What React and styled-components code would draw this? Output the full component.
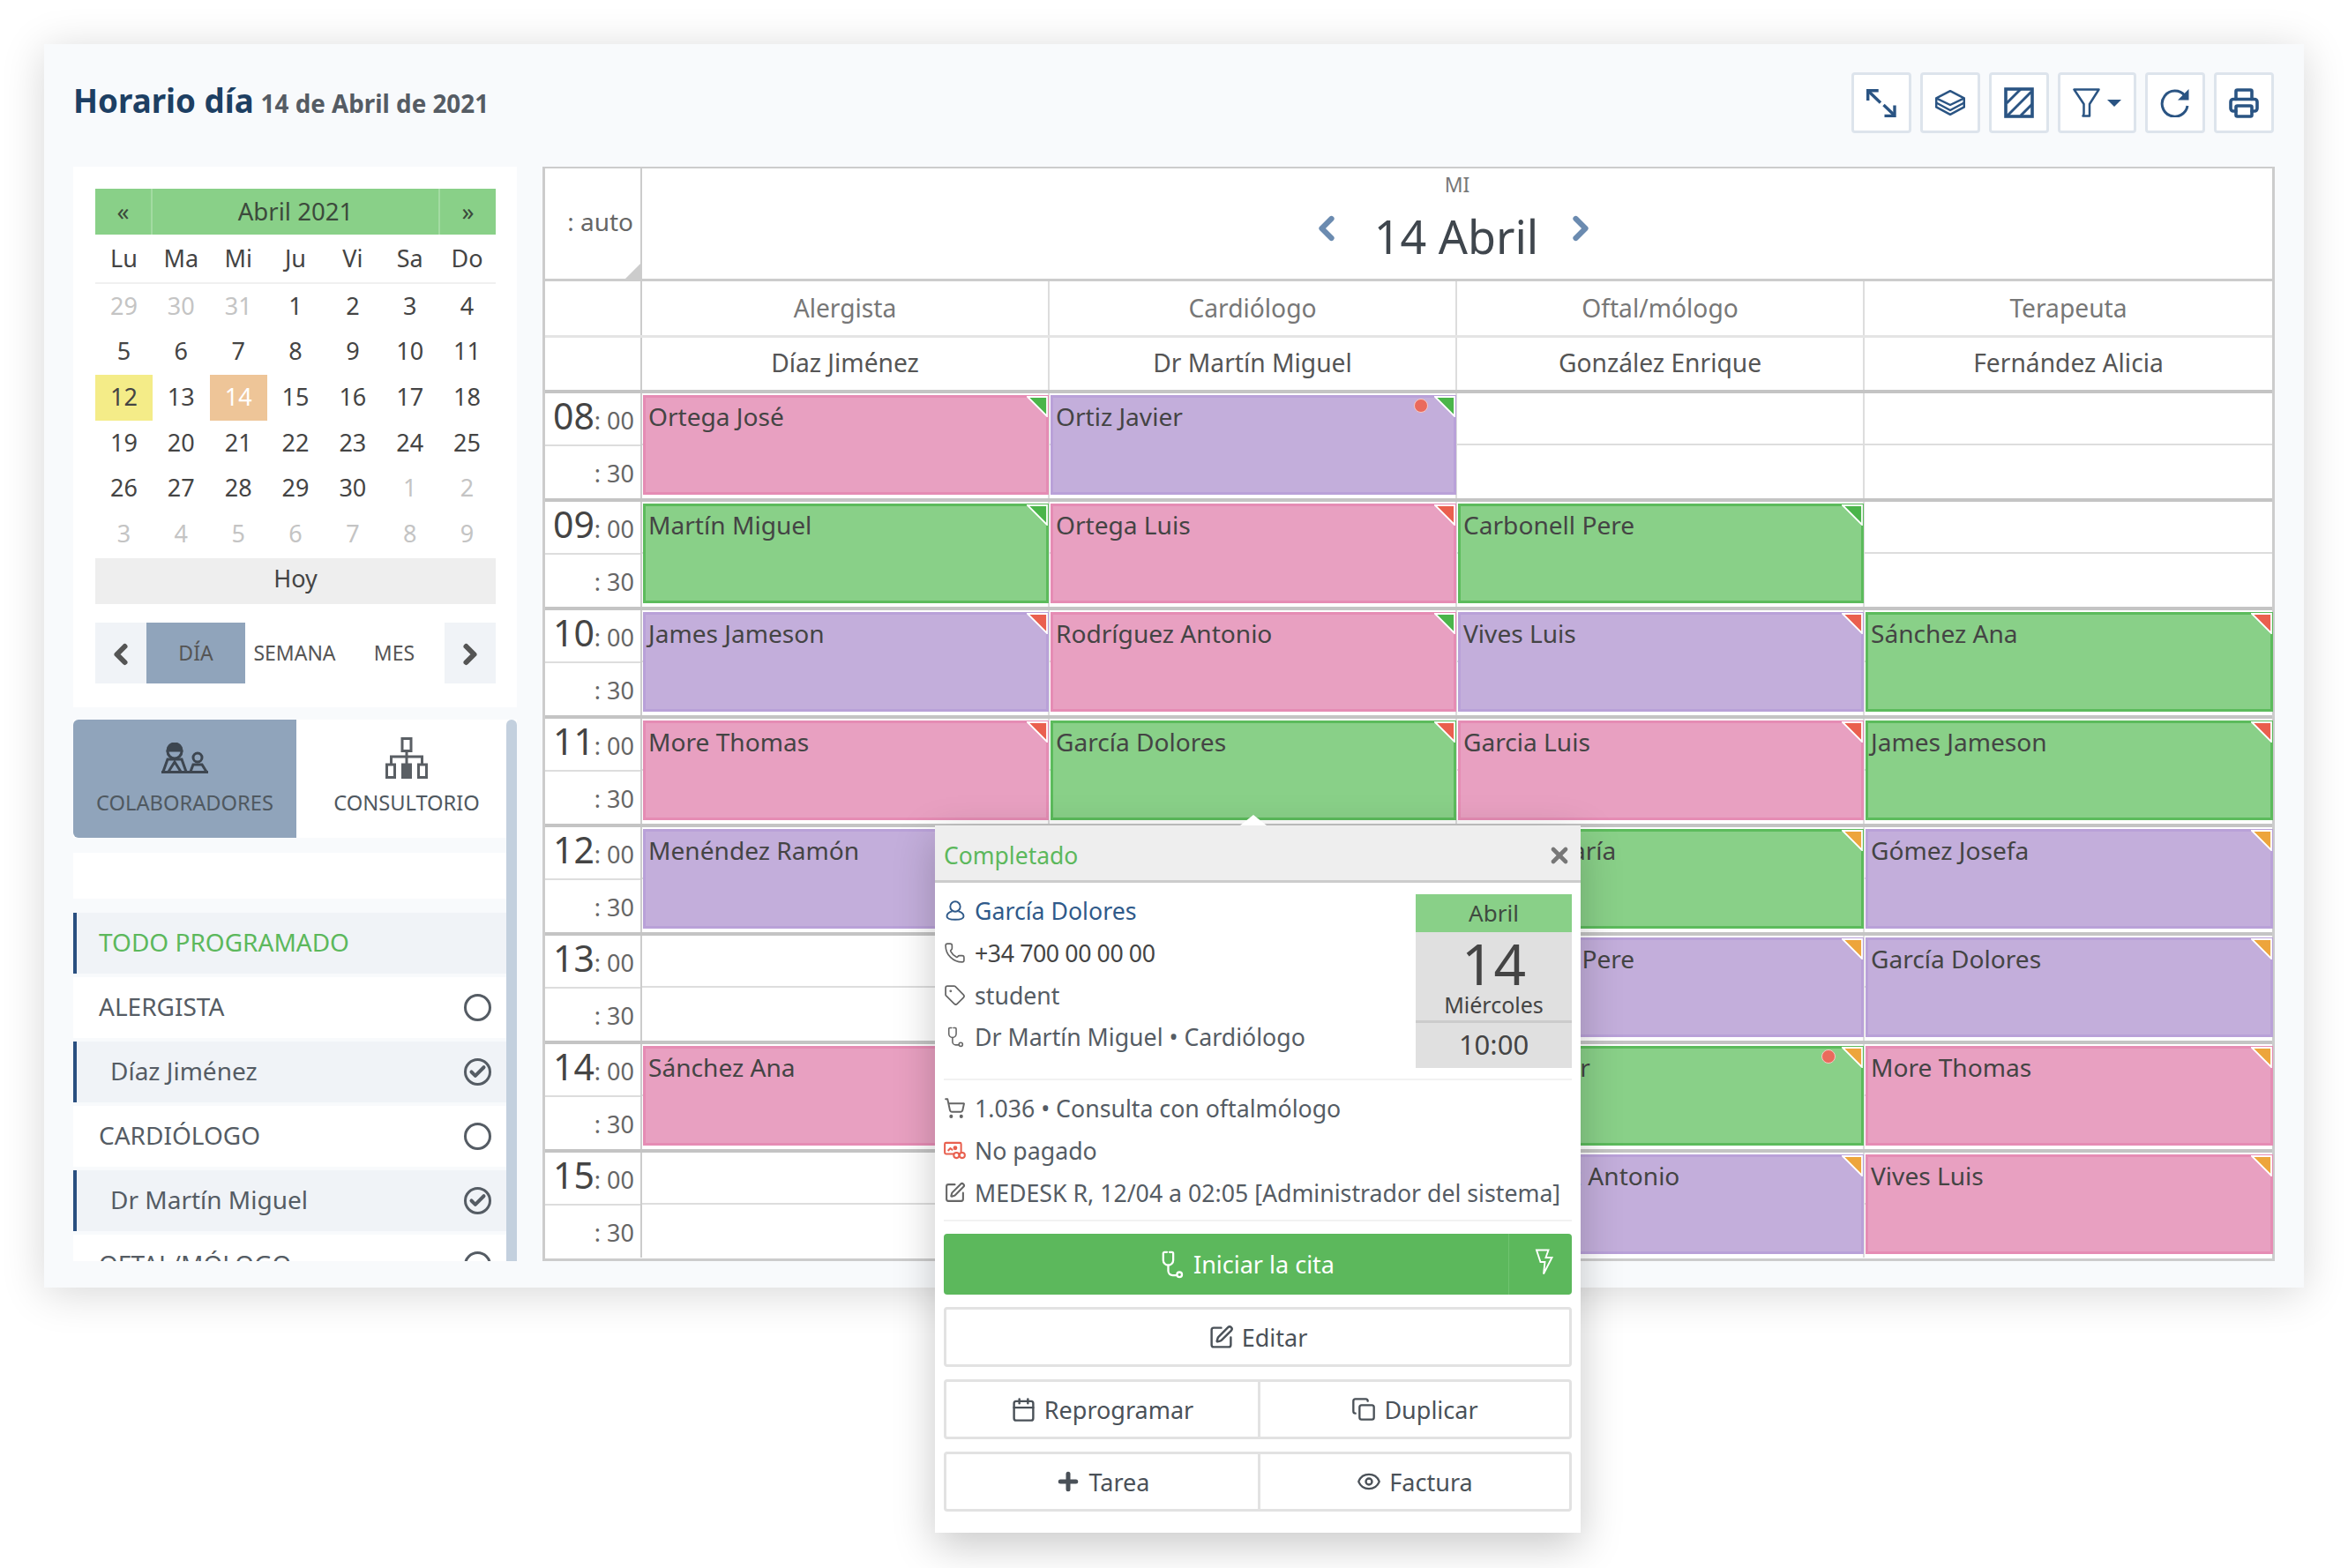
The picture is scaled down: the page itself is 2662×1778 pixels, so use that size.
import React from 'react';
import styled, { createGlobalStyle } from 'styled-components';
import { Phone, Tag, ShoppingCart, SquarePen, Calendar, Copy, Plus, Eye, Printer, X, ChevronLeft, ChevronRight, Check } from 'lucide-react';

const Global = createGlobalStyle`
  html, body { margin: 0; padding: 0; background: #fff; overflow: hidden; }
  body { font-family: "Noto Sans", "Open Sans", sans-serif; color: #444; }
  * { box-sizing: border-box; }
`;

const Page = styled.div`
  width: 2662px;
  height: 1778px;
  padding: 50px;
`;
const Card = styled.div`
  width: 2562px;
  height: 1410px;
  background: #f8fafc;
  box-shadow: 0 6px 46px rgba(0, 0, 0, 0.16);
  padding: 32px 34px 0 33px;
`;
const Header = styled.header`
  height: 69px;
  display: flex;
  align-items: center;
  justify-content: space-between;
  margin-bottom: 38px;
`;
const Title = styled.h1`
  margin: 0;
  padding-bottom: 5px;
  font-size: 36.7px;
  font-weight: 700;
  color: #1d3f63;
  display: flex;
  align-items: baseline;
  gap: 8px;
`;
const Subtitle = styled.span`
  font-size: 27.8px;
  font-weight: 700;
  color: #555c64;
`;
const Tools = styled.div`
  display: flex;
  gap: 10px;
`;
const ToolButton = styled.div`
  width: ${p => p.$w || 68}px;
  height: 69px;
  background: #fff;
  border: 3px solid #dde4ec;
  border-radius: 4px;
  display: flex;
  align-items: center;
  justify-content: center;
  gap: 8px;
  color: #2a5483;
`;
const Caret = styled.span`
  width: 0;
  height: 0;
  border-left: 8px solid transparent;
  border-right: 8px solid transparent;
  border-top: 8px solid #2a5483;
`;
const Body = styled.main`
  display: flex;
  gap: 29px;
  align-items: flex-start;
`;
const Sidebar = styled.aside`
  width: 503px;
  flex: none;
  height: 1241px;
  display: flex;
  flex-direction: column;
  gap: 14px;
  overflow: hidden;
`;
const CalendarPanel = styled.section`
  background: #fff;
  height: 613px;
  padding: 25px 24px 0 25px;
  flex: none;
`;
const MonthBar = styled.div`
  display: grid;
  grid-template-columns: 65px 1fr 65px;
  height: 52px;
  background: #89d088;
  color: #3c4a3c;
`;
const MonthCell = styled.div`
  display: flex;
  align-items: center;
  justify-content: center;
  padding-bottom: 2px;
  border-left: ${p => (p.$line ? '2px solid #a3dba2' : 'none')};
  border-right: ${p => (p.$rline ? '2px solid #a3dba2' : 'none')};
  font-size: 27.6px;
`;
const WeekRow = styled.div`
  display: grid;
  grid-template-columns: repeat(7, 1fr);
  height: 56px;
  padding-bottom: 1px;
  border-bottom: 2px solid #f0f0f0;
`;
const WeekDay = styled.div`
  display: flex;
  align-items: center;
  justify-content: center;
  font-size: 27px;
  color: #444;
`;
const DayGrid = styled.div`
  display: grid;
  grid-template-columns: repeat(7, 1fr);
  grid-auto-rows: 51.6px;
  margin-bottom: 1.4px;
`;
const Day = styled.div`
  display: flex;
  align-items: center;
  justify-content: center;
  padding-bottom: 3px;
  font-size: 27px;
  color: ${p => (p.$today ? '#fff' : p.$muted ? '#c4c4c4' : '#444')};
  background: ${p => (p.$today ? '#eec598' : p.$mark ? '#f4ec88' : 'transparent')};
`;
const TodayBar = styled.div`
  height: 52px;
  background: #eee;
  display: flex;
  align-items: center;
  justify-content: center;
  padding-bottom: 6px;
  font-size: 27px;
  color: #444;
`;
const ViewBar = styled.div`
  margin-top: 21px;
  height: 69px;
  display: grid;
  grid-template-columns: 58px 112px 112px 114px 58px;
`;
const ViewArrow = styled.div`
  background: #f0f3f7;
  color: #555;
  display: flex;
  align-items: center;
  justify-content: center;
  padding-top: 4px;
`;
const ViewTab = styled.div`
  display: flex;
  align-items: center;
  justify-content: center;
  font-size: 23px;
  color: #555;
  background: ${p => (p.$on ? '#90a4bb' : 'transparent')};
`;
const ListArea = styled.section`
  position: relative;
  height: 614px;
  flex: none;
  overflow: hidden;
`;
const Scrollbar = styled.div`
  position: absolute;
  top: 0;
  right: 0;
  bottom: 0;
  width: 12px;
  background: #c3d0de;
  border-radius: 6px 6px 0 0;
`;
const Tabs = styled.div`
  display: grid;
  grid-template-columns: 253px 1fr;
  height: 134px;
  background: #fff;
`;
const TabItem = styled.div`
  display: flex;
  flex-direction: column;
  align-items: center;
  justify-content: flex-end;
  gap: 8px;
  padding-bottom: 24px;
  font-size: 23.7px;
  color: #4f5860;
  background: ${p => (p.$on ? '#90a4bb' : '#fff')};
  border-radius: ${p => (p.$on ? '6px 0 0 6px' : '0')};
`;
const TabIcon = styled.span`
  height: 50px;
  display: flex;
  align-items: center;
  padding-bottom: 3px;
`;
const Search = styled.div`
  height: 52px;
  margin: 17px 11px 16px 0;
  background: #fff;
`;
const List = styled.div`
  display: flex;
  flex-direction: column;
  gap: 4px;
  margin-right: 11px;
`;
const ListRow = styled.div`
  flex: none;
  height: 69px;
  display: flex;
  align-items: center;
  justify-content: space-between;
  padding: 0 18px 3px ${p => (p.$sel ? 38 : 25)}px;
  font-size: 28px;
  color: ${p => (p.$green ? '#5cb85c' : '#555c64')};
  background: ${p => (p.$sel || p.$green ? '#f0f3f7' : '#fff')};
  border-left: 4px solid ${p => (p.$sel || p.$green ? '#2a4f80' : 'transparent')};
`;
const Radio = styled.span`
  width: 31px;
  height: 31px;
  margin-top: 3px;
  border-radius: 50%;
  border: 3px solid #555c64;
  display: flex;
  align-items: center;
  justify-content: center;
  color: #555c64;
`;
const Schedule = styled.section`
  position: relative;
  flex: none;
  width: 1964px;
  height: 1241px;
  background: #fff;
  border: 3px solid #ccc;
  border-top-width: 2px;
  display: flex;
  flex-direction: column;
`;
const DayHead = styled.div`
  display: grid;
  grid-template-columns: 110px 1fr;
  height: 128px;
  flex: none;
  border-bottom: 3px solid #ccc;
`;
const AutoCell = styled.div`
  position: relative;
  border-right: 2px solid #ccc;
  display: flex;
  align-items: center;
  justify-content: flex-end;
  padding: 0 8px 6px 0;
  font-size: 28px;
  color: #666;
`;
const AutoCorner = styled.span`
  position: absolute;
  right: 0;
  bottom: 0;
  width: 0;
  height: 0;
  border-left: 17px solid transparent;
  border-bottom: 17px solid #ccc;
`;
const DayCenter = styled.div`
  display: flex;
  flex-direction: column;
  align-items: center;
  color: #666;
`;
const DayShort = styled.div`
  font-size: 23px;
  line-height: 30px;
  margin-top: 3px;
  color: #777;
`;
const DayTitle = styled.div`
  display: flex;
  align-items: center;
  margin-top: 8px;
  padding-right: 8px;
  font-size: 52px;
  line-height: 72px;
  color: #3f464d;
`;
const DayArrow = styled.span`
  color: #6b8bb0;
  display: flex;
  margin-top: -18px;
  margin-left: ${p => p.$ml}px;
  margin-right: ${p => p.$mr}px;
`;
const HeadRow = styled.div`
  display: grid;
  grid-template-columns: 110px repeat(4, 1fr);
  height: ${p => p.$h}px;
  flex: none;
  border-bottom: ${p => p.$line};
`;
const HeadBlank = styled.div`
  border-right: 2px solid #ccc;
`;
const HeadCell = styled.div`
  display: flex;
  align-items: center;
  justify-content: center;
  padding-bottom: ${p => p.$pb}px;
  font-size: 28.2px;
  color: ${p => p.$c};
  border-right: ${p => (p.$last ? 'none' : '2px solid #ddd')};
`;
const HourRow = styled.div`
  display: grid;
  grid-template-columns: 110px repeat(4, 1fr);
  height: 123px;
  flex: none;
  border-top: 4px solid #c4c4c4;
`;
const TimeCell = styled.div`
  border-right: 2px solid #ccc;
  display: grid;
  grid-template-rows: 1fr 1fr;
`;
const TimeTop = styled.div`
  display: flex;
  align-items: baseline;
  justify-content: flex-end;
  padding-right: 7px;
  border-bottom: 2px solid #ddd;
  font-size: 27px;
  line-height: 50px;
  color: #666;
`;
const TimeBig = styled.span`
  font-size: 41px;
  color: #444;
`;
const TimeBottom = styled.div`
  display: flex;
  align-items: center;
  justify-content: flex-end;
  padding: 3px 7px 0 0;
  font-size: 27px;
  color: #666;
`;
const Slot = styled.div`
  min-width: 0;
  border-right: ${p => (p.$last ? 'none' : '2px solid #ddd')};
  background: linear-gradient(#ddd, #ddd) 0 calc(50% - 2px) / 100% 2px no-repeat;
`;
const Tints = {
  pink: ['#e8a0c1', '#e58cb4'],
  purple: ['#c3aedb', '#b9a1d8'],
  green: ['#89d088', '#5cbb5c'],
};
const Flags = { g: '#4ab54a', r: '#ea5f4e', o: '#eda53c' };
const Event = styled.div`
  position: relative;
  height: 113px;
  margin: 2px -1px 0 1px;
  background: ${p => Tints[p.$tint][0]};
  border: 3px solid ${p => Tints[p.$tint][1]};
  padding: 2px 3px 3px 3px;
  font-size: 28.1px;
  line-height: 38px;
  color: #444;
  white-space: nowrap;
`;
const Flag = styled.span`
  position: absolute;
  top: -2px;
  right: -2px;
  width: 24px;
  height: 24px;
  display: flex;
`;
const Dot = styled.span`
  position: absolute;
  top: 1px;
  right: 29px;
  width: 16px;
  height: 16px;
  border-radius: 50%;
  background: #ea6a5c;
  border: 1px solid #f5c9c4;
`;
const Popup = styled.div`
  position: absolute;
  left: 442px;
  top: 745px;
  width: 732px;
  height: 802px;
  background: #fff;
  box-shadow: 0 14px 44px rgba(0, 0, 0, 0.22);
  display: flex;
  flex-direction: column;
  z-index: 5;
`;
const PopArrow = styled.span`
  position: absolute;
  left: 346px;
  top: -12px;
  width: 0;
  height: 0;
  border-left: 15px solid transparent;
  border-right: 15px solid transparent;
  border-bottom: 12px solid #fff;
`;
const PopHead = styled.div`
  height: 65px;
  flex: none;
  background: #eee;
  border-bottom: 3px solid #ccc;
  display: flex;
  align-items: center;
  justify-content: space-between;
  padding: 5px 10px 0 10px;
  font-size: 26.5px;
  color: #5cb85c;
`;
const PopClose = styled.span`
  color: #777;
  display: flex;
`;
const PopBody = styled.div`
  padding: 8px 10px 0;
`;
const InfoTop = styled.div`
  display: flex;
  justify-content: space-between;
  height: 216px;
  border-bottom: 2px solid #f2f2f2;
`;
const InfoRows = styled.div`
  display: flex;
  flex-direction: column;
`;
const InfoRow = styled.div`
  height: 47.7px;
  display: flex;
  align-items: center;
  gap: 10px;
  font-size: 26.7px;
  letter-spacing: ${p => p.$ls || 0}px;
  white-space: nowrap;
  color: ${p => p.$c || '#555c64'};
`;
const IconSlot = styled.span`
  width: 25px;
  flex: none;
  display: flex;
  justify-content: center;
  color: ${p => p.$c || '#666'};
`;
const DateBox = styled.div`
  width: 177px;
  height: 197px;
  margin-top: 5px;
  background: #e0e0e0;
  text-align: center;
  display: flex;
  flex-direction: column;
`;
const DateMonth = styled.div`
  height: 43px;
  line-height: 42px;
  background: #89d088;
  font-size: 26px;
  color: #3f4a3f;
`;
const DateDay = styled.div`
  height: 103px;
  border-bottom: 3px solid #ccc;
  color: #444;
`;
const DateNum = styled.div`
  font-size: 64px;
  line-height: 66px;
  margin-top: 3px;
`;
const DateName = styled.div`
  font-size: 25px;
  line-height: 27px;
`;
const DateTime = styled.div`
  font-size: 31px;
  line-height: 49px;
  color: #444;
`;
const InfoBottom = styled.div`
  padding-top: 8px;
  height: 160px;
  border-bottom: 2px solid #f2f2f2;
`;
const Actions = styled.div`
  margin-top: 14px;
  display: flex;
  flex-direction: column;
  gap: 14px;
`;
const StartButton = styled.div`
  height: 69px;
  background: #5cb85c;
  border-radius: 4px;
  display: grid;
  grid-template-columns: 1fr 71px;
  color: #fff;
  font-size: 27px;
`;
const StartMain = styled.div`
  display: flex;
  align-items: center;
  justify-content: center;
  gap: 8px;
  border-right: 1px solid #70c470;
  padding-left: 44px;
`;
const StartSide = styled.div`
  display: flex;
  align-items: center;
  justify-content: center;
  padding: 0 0 6px 8px;
`;
const ActionRow = styled.div`
  height: 68px;
  display: grid;
  grid-template-columns: repeat(${p => p.$n}, 1fr);
  border: 3px solid #e2e2e2;
  border-radius: 4px;
`;
const Action = styled.div`
  display: flex;
  align-items: center;
  justify-content: center;
  gap: 9px;
  font-size: 27px;
  color: #4a5158;
  border-left: ${p => (p.$line ? '3px solid #e2e2e2' : 'none')};
`;

const Steth = ({ size = 24, w = 1.7 }) => (
  <svg width={size} height={size} viewBox="0 0 24 24" fill="none" stroke="currentColor" strokeWidth={w} strokeLinecap="round" strokeLinejoin="round">
    <path d="M8.5 2H6.5a1 1 0 0 0-1 1v5.5a4 4 0 0 0 8 0V3a1 1 0 0 0-1-1h-2" />
    <path d="M9.5 12.5V17a3.5 3.5 0 0 0 3.5 3.5h3" />
    <circle cx="18.5" cy="20" r="2" />
  </svg>
);
const BoltIcon = () => (
  <svg width="22" height="30" viewBox="0 0 22 30" fill="none" stroke="#fff" strokeWidth="1.9" strokeLinejoin="miter">
    <path d="M2 1.5h13.5l-3 8.5h7L10 28.5l1.5-13.5H6.5z" />
  </svg>
);
const ExpandIcon = () => (
  <svg width="34" height="32" viewBox="0 0 34 32" fill="none" stroke="#2a5483" strokeWidth="3.4">
    <path d="M1.7 13V1.7h12" />
    <path d="M3 3l13 12.5M19.5 18l11.5 11" />
    <path d="M32 18.5v12H20.5" />
  </svg>
);
const LayersIcon = () => (
  <svg width="34" height="29" viewBox="0 0 34 29" fill="none" stroke="#2a5483" strokeWidth="2.5" strokeLinejoin="round">
    <path d="M17 1.2L32.8 9.3v10L17 27.8 1.2 19.3v-10z" />
    <path d="M1.2 9.3L17 17 32.8 9.3" />
    <path d="M1.2 14.5L17 23 32.8 14.5" />
  </svg>
);
const HatchIcon = () => (
  <svg width="34" height="35" viewBox="0 0 34 35" fill="none" stroke="#2a5483">
    <rect x="2" y="2" width="30" height="31" strokeWidth="3.6" />
    <path d="M3 18L19 2M4 32L31 5M19 32L32 19" strokeWidth="3" />
  </svg>
);
const FunnelIcon = () => (
  <svg width="31" height="33" viewBox="0 0 31 33" fill="none" stroke="#2a5483" strokeWidth="2.5" strokeLinejoin="round">
    <path d="M1.5 1.5h28L19 18v13.5h-7.5c1-1 1-2 1-3V18z" />
  </svg>
);
const RefreshIcon = () => (
  <svg width="34" height="33" viewBox="0 0 34 33" fill="none">
    <path d="M28 8.5A14.5 14.5 0 1 0 31 20" stroke="#2a5483" strokeWidth="3" />
    <path d="M32.5 1v12.5H20z" fill="#2a5483" />
  </svg>
);
const UserIcon = () => (
  <svg width="22" height="23" viewBox="0 0 22 23" fill="none" stroke="currentColor" strokeWidth="1.9">
    <circle cx="11" cy="7" r="5.7" />
    <path d="M7.5 12.3C4 13.2 1.5 15.3 1.5 18c0 2.7 2.5 3.8 9.5 3.8s9.5-1.1 9.5-3.8c0-2.7-2.5-4.8-6-5.7" />
  </svg>
);
const TeamIcon = () => (
  <svg width="53" height="35" viewBox="0 0 53 35" fill="none" stroke="#3d4650" strokeWidth="3">
    <circle cx="15" cy="10" r="8" />
    <path d="M7 9a8 8 0 0 1 16 0z" fill="#3d4650" />
    <path d="M2 33l5-14h16l5 14" />
    <path d="M8 33l7-11 7 11" />
    <circle cx="41" cy="17" r="5" />
    <path d="M33 33l3-8h10l5 8" />
    <path d="M0 33.5h53" strokeWidth="3" />
  </svg>
);
const TreeIcon = () => (
  <svg width="48" height="47" viewBox="0 0 48 47" fill="none" stroke="#5a5f64" strokeWidth="3">
    <rect x="19" y="1.5" width="10" height="14" />
    <path d="M24 15.5v16M6.5 30v-8h35v8" />
    <rect x="1.5" y="31" width="9" height="14.5" />
    <rect x="19.5" y="31" width="9" height="14.5" fill="#5a5f64" />
    <rect x="37.5" y="31" width="9" height="14.5" />
  </svg>
);
const UnpaidIcon = () => (
  <svg width="27" height="21" viewBox="0 0 27 21" fill="none" stroke="#e8604f" strokeWidth="2.2">
    <rect x="1.2" y="1.2" width="20" height="13.6" rx="1.5" />
    <path d="M5 11l3-3 3 2" />
    <circle cx="14" cy="7.5" r="2.6" fill="#e8604f" stroke="none" />
    <circle cx="15.5" cy="16.5" r="3.3" fill="#fff" />
    <circle cx="22.5" cy="16.5" r="3.3" fill="#fff" />
  </svg>
);
const Corner = ({ color }) => (
  <svg width="24" height="24" viewBox="0 0 24 24">
    <path d="M1 1h22v22z" fill={color} stroke="#fff" strokeWidth="1.8" strokeLinejoin="miter" />
  </svg>
);

const weekDays = ['Lu', 'Ma', 'Mi', 'Ju', 'Vi', 'Sa', 'Do'];
const days = [
  ...[29, 30, 31].map(d => ({ d, muted: true })),
  ...Array.from({ length: 30 }, (_, i) => ({ d: i + 1, mark: i === 11, today: i === 13 })),
  ...[1, 2, 3, 4, 5, 6, 7, 8, 9].map(d => ({ d, muted: true })),
];
const doctors = [
  ['Alergista', 'Díaz Jiménez'],
  ['Cardiólogo', 'Dr Martín Miguel'],
  ['Oftal/mólogo', 'González Enrique'],
  ['Terapeuta', 'Fernández Alicia'],
];
const hours = [
  ['08', [['Ortega José', 'pink', 'g'], ['Ortiz Javier', 'purple', 'g', true], null, null]],
  ['09', [['Martín Miguel', 'green', 'g'], ['Ortega Luis', 'pink', 'r'], ['Carbonell Pere', 'green', 'g'], null]],
  ['10', [['James Jameson', 'purple', 'r'], ['Rodríguez Antonio', 'pink', 'g'], ['Vives Luis', 'purple', 'r'], ['Sánchez Ana', 'green', 'r']]],
  ['11', [['More Thomas', 'pink', 'r'], ['García Dolores', 'green', 'r'], ['Garcia Luis', 'pink', 'r'], ['James Jameson', 'green', 'r']]],
  ['12', [['Menéndez Ramón', 'purple', 'o'], null, ['Muñoz María', 'green', 'o'], ['Gómez Josefa', 'purple', 'o']]],
  ['13', [null, null, ['Carbonell Pere', 'purple', 'o'], ['García Dolores', 'purple', 'o']]],
  ['14', [['Sánchez Ana', 'pink', 'o'], null, ['Ortiz Javier', 'green', 'o', true], ['More Thomas', 'pink', 'o']]],
  ['15', [null, null, ['Rodríguez Antonio', 'purple', 'o'], ['Vives Luis', 'pink', 'o']]],
];
const listRows = [
  { t: 'TODO PROGRAMADO', green: true },
  { t: 'ALERGISTA' },
  { t: 'Díaz Jiménez', sel: true },
  { t: 'CARDIÓLOGO' },
  { t: 'Dr Martín Miguel', sel: true },
  { t: 'OFTAL/MÓLOGO' },
];

export default function App() {
  return (
    <Page>
      <Global />
      <Card>
        <Header>
          <Title>Horario día <Subtitle>14 de Abril de 2021</Subtitle></Title>
          <Tools>
            <ToolButton><ExpandIcon /></ToolButton>
            <ToolButton><LayersIcon /></ToolButton>
            <ToolButton><HatchIcon /></ToolButton>
            <ToolButton $w={89}><FunnelIcon /><Caret /></ToolButton>
            <ToolButton><RefreshIcon /></ToolButton>
            <ToolButton><Printer size={36} strokeWidth={2.4} /></ToolButton>
          </Tools>
        </Header>
        <Body>
          <Sidebar>
            <CalendarPanel>
              <MonthBar>
                <MonthCell $rline>«</MonthCell>
                <MonthCell>Abril 2021</MonthCell>
                <MonthCell $line>»</MonthCell>
              </MonthBar>
              <WeekRow>{weekDays.map(w => <WeekDay key={w}>{w}</WeekDay>)}</WeekRow>
              <DayGrid>
                {days.map((x, i) => <Day key={i} $muted={x.muted} $mark={x.mark} $today={x.today}>{x.d}</Day>)}
              </DayGrid>
              <TodayBar>Hoy</TodayBar>
              <ViewBar>
                <ViewArrow><ChevronLeft size={36} strokeWidth={4} /></ViewArrow>
                <ViewTab $on>DÍA</ViewTab>
                <ViewTab>SEMANA</ViewTab>
                <ViewTab>MES</ViewTab>
                <ViewArrow><ChevronRight size={36} strokeWidth={4} /></ViewArrow>
              </ViewBar>
            </CalendarPanel>
            <ListArea>
              <Tabs>
                <TabItem $on><TabIcon><TeamIcon /></TabIcon>COLABORADORES</TabItem>
                <TabItem><TabIcon><TreeIcon /></TabIcon>CONSULTORIO</TabItem>
              </Tabs>
              <Search />
              <List>
                {listRows.map(r => (
                  <ListRow key={r.t} $sel={r.sel} $green={r.green}>
                    {r.t}
                    {!r.green && <Radio>{r.sel && <Check size={21} strokeWidth={4.6} />}</Radio>}
                  </ListRow>
                ))}
              </List>
              <Scrollbar />
            </ListArea>
          </Sidebar>
          <Schedule>
            <DayHead>
              <AutoCell>: auto<AutoCorner /></AutoCell>
              <DayCenter>
                <DayShort>MI</DayShort>
                <DayTitle>
                  <DayArrow $ml={0} $mr={32}><ChevronLeft size={44} strokeWidth={3.4} /></DayArrow>
                  14 Abril
                  <DayArrow $ml={26} $mr={0}><ChevronRight size={44} strokeWidth={3.4} /></DayArrow>
                </DayTitle>
              </DayCenter>
            </DayHead>
            <HeadRow $h={64} $line="3px solid #e4e4e4">
              <HeadBlank />
              {doctors.map((d, i) => <HeadCell key={d[0]} $c="#777" $pb={2} $last={i === 3}>{d[0]}</HeadCell>)}
            </HeadRow>
            <HeadRow $h={59} $line="none">
              <HeadBlank />
              {doctors.map((d, i) => <HeadCell key={d[1]} $c="#555" $pb={4} $last={i === 3}>{d[1]}</HeadCell>)}
            </HeadRow>
            {hours.map(([h, cells]) => (
              <HourRow key={h}>
                <TimeCell>
                  <TimeTop><TimeBig>{h}</TimeBig>: 00</TimeTop>
                  <TimeBottom>: 30</TimeBottom>
                </TimeCell>
                {cells.map((c, i) => (
                  <Slot key={i} $last={i === 3}>
                    {c && (
                      <Event $tint={c[1]}>
                        {c[0]}
                        {c[3] && <Dot />}
                        <Flag><Corner color={Flags[c[2]]} /></Flag>
                      </Event>
                    )}
                  </Slot>
                ))}
              </HourRow>
            ))}
            <Popup>
              <PopArrow />
              <PopHead>Completado<PopClose><X size={28} strokeWidth={4} /></PopClose></PopHead>
              <PopBody>
                <InfoTop>
                  <InfoRows>
                    <InfoRow $c="#2f5a8a"><IconSlot $c="#2f5a8a"><UserIcon /></IconSlot>García Dolores</InfoRow>
                    <InfoRow $c="#444" $ls={-0.4}><IconSlot><Phone size={25} strokeWidth={1.6} /></IconSlot>+34 700 00 00 00</InfoRow>
                    <InfoRow><IconSlot><Tag size={27} strokeWidth={1.7} /></IconSlot>student</InfoRow>
                    <InfoRow><IconSlot><Steth size={30} w={1.5} /></IconSlot>Dr Martín Miguel • Cardiólogo</InfoRow>
                  </InfoRows>
                  <DateBox>
                    <DateMonth>Abril</DateMonth>
                    <DateDay>
                      <DateNum>14</DateNum>
                      <DateName>Miércoles</DateName>
                    </DateDay>
                    <DateTime>10:00</DateTime>
                  </DateBox>
                </InfoTop>
                <InfoBottom>
                  <InfoRow><IconSlot><ShoppingCart size={25} strokeWidth={1.9} /></IconSlot>1.036 • Consulta con oftalmólogo</InfoRow>
                  <InfoRow><IconSlot><UnpaidIcon /></IconSlot>No pagado</InfoRow>
                  <InfoRow><IconSlot><SquarePen size={25} strokeWidth={2} /></IconSlot>MEDESK R, 12/04 a 02:05 [Administrador del sistema]</InfoRow>
                </InfoBottom>
                <Actions>
                  <StartButton>
                    <StartMain><Steth size={34} w={1.6} />Iniciar la cita</StartMain>
                    <StartSide><BoltIcon /></StartSide>
                  </StartButton>
                  <ActionRow $n={1}><Action><SquarePen size={29} strokeWidth={2} />Editar</Action></ActionRow>
                  <ActionRow $n={2}>
                    <Action><Calendar size={29} strokeWidth={2} />Reprogramar</Action>
                    <Action $line><Copy size={28} strokeWidth={2} />Duplicar</Action>
                  </ActionRow>
                  <ActionRow $n={2}>
                    <Action><Plus size={30} strokeWidth={4} />Tarea</Action>
                    <Action $line><Eye size={28} strokeWidth={2} />Factura</Action>
                  </ActionRow>
                </Actions>
              </PopBody>
            </Popup>
          </Schedule>
        </Body>
      </Card>
    </Page>
  );
}
